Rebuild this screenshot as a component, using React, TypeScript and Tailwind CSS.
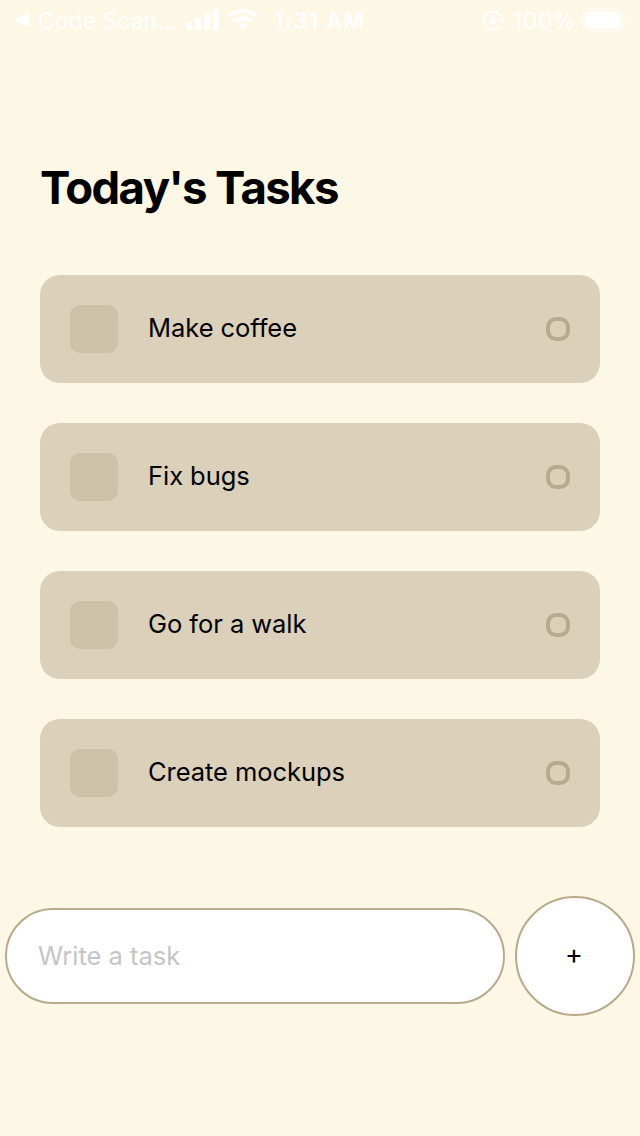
const tasks = ["Make coffee", "Fix bugs", "Go for a walk", "Create mockups"];

function StatusBar() {
  return (
    <header className="flex h-10 items-center text-[23px] leading-10 text-white">
      <svg className="ml-[13px] h-4 w-4" viewBox="0 0 16 16" fill="currentColor">
        <path d="M1.500 7.100 15 .8q1.300-.4 1.300 1v12.500q0 1.300-1.300.8L1.500 8.900q-1.500-.9 0-1.800Z" />
      </svg>
      <span className="ml-[9px] w-[148px] whitespace-nowrap pt-0.5">Code Scan...</span>
      <svg className="mb-px h-[21px] w-[34px]" viewBox="0 0 34 21" fill="currentColor">
        <rect x="0" y="13" width="6" height="8" rx="1.500" />
        <rect x="9" y="9" width="6" height="12" rx="1.500" />
        <rect x="18" y="4" width="6" height="17" rx="1.500" />
        <rect x="27" y="0" width="6" height="21" rx="1.500" />
      </svg>
      <svg className="ml-2 h-[22px] w-[30px]" viewBox="0 0 30 22" fill="currentColor">
        <path d="M15 0C9.500 0 4.200 2.100.4 5.800q-.5.500 0 1l1.800 1.800q.5.500 1 0a17 17 0 0 1 23.600 0q.5.500 1 0l1.800-1.800q.5-.500 0-1A21 21 0 0 0 15 0Z" />
        <path d="M15 7.200c-3.600 0-6.900 1.400-9.400 3.600q-.6.500 0 1.100l1.800 1.800q.5.500 1 0a9.900 9.900 0 0 1 13.200 0q.5.500 1 0l1.800-1.800q.6-.6 0-1.100A14 14 0 0 0 15 7.200Z" />
        <path d="M15 14.300c-1.700 0-3.200.6-4.400 1.600q-.5.500 0 1l3.900 3.900q.5.500 1 0l3.900-3.900q.5-.500 0-1a7 7 0 0 0-4.400-1.600Z" />
      </svg>
      <span className="ml-4 w-[92px] whitespace-nowrap pt-0.5 font-semibold tracking-[0.900px]">1:31 AM</span>
      <svg className="ml-[117px] size-[22px]" viewBox="0 0 22 22" fill="none" stroke="currentColor" strokeWidth="2">
        <path d="M18.200 8.500A8.800 8.800 0 1 0 16.500 17" />
        <path d="M15.500 9h6L18.500 13Z" fill="currentColor" stroke="none" />
        <rect x="6.300" y="9.500" width="7" height="5.500" rx="1" fill="currentColor" stroke="none" />
        <path d="M7.800 10V8.300a2 2 0 0 1 4 0V10" strokeWidth="1.400" />
      </svg>
      <span className="ml-[8px] w-[62px] whitespace-nowrap pt-0.5 tracking-[0.500px]">100%</span>
      <svg className="ml-[6px] h-6 w-12" viewBox="0 0 48 24" fill="currentColor">
        <rect x="1" y="1" width="42" height="22" rx="6" fill="none" stroke="currentColor" strokeWidth="2" opacity=".4" />
        <rect x="4" y="4" width="36" height="16" rx="3.500" />
        <path d="M46 8q2 1.500 2 4t-2 4Z" opacity=".4" />
      </svg>
    </header>
  );
}

export default function App() {
  return (
    <main className="flex h-[1136px] w-[640px] flex-col bg-[#fdf7e6] font-['Inter',sans-serif] text-black">
      <StatusBar />
      <h1 className="mt-[118px] px-10 text-[45.500px] leading-[60px] font-bold tracking-[-1.600px]">Today's Tasks</h1>
      <ul className="mt-[57px] flex flex-col gap-10 px-10">
        {tasks.map((task) => (
          <li key={task} className="flex h-[108px] items-center rounded-[20px] bg-[#dbd0ba] px-[30px]">
            <span className="size-12 rounded-[10px] bg-[#cdc1a7]" />
            <span className="ml-[30px] pb-0.5 text-[25.500px] tracking-[-0.050px]">{task}</span>
            <span className="ml-auto size-6 rounded-[10px] border-4 border-[#b8aa8c]" />
          </li>
        ))}
      </ul>
      <form className="mt-[69px] flex items-center justify-between px-[5px]" onSubmit={(e) => e.preventDefault()}>
        <input
          placeholder="Write a task"
          aria-label="Task"
          className="h-24 w-[500px] rounded-full border-2 border-[#b8aa8c] bg-white px-[31px] pb-0.5 text-[25.500px] outline-none placeholder:text-[#c5c5c7]"
        />
        <button type="submit" className="size-[120px] rounded-full border-2 border-[#b8aa8c] bg-white pr-0.5 pb-[3px] text-[27px] leading-none">
          +
        </button>
      </form>
    </main>
  );
}
